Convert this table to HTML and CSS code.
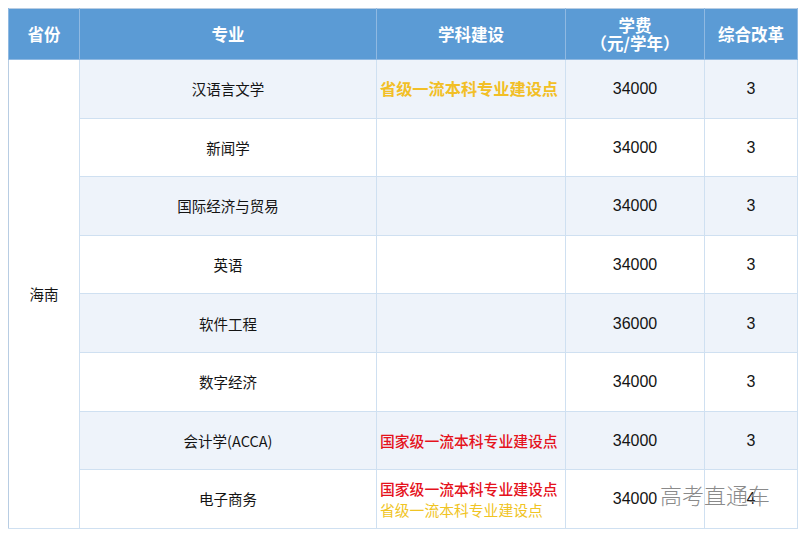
FILE: index.html
```html
<!DOCTYPE html>
<html lang="zh">
<head>
<meta charset="utf-8">
<link rel="stylesheet" href="styles.css">
</head>
<body>
<div class="wrap">
<table class="grid">
  <colgroup>
    <col class="c1"><col class="c2"><col class="c3"><col class="c4"><col class="c5">
  </colgroup>
  <thead>
    <tr>
      <th>省份</th>
      <th>专业</th>
      <th>学科建设</th>
      <th class="fee"><span class="ln">学费</span><span class="ln">（元/学年）</span></th>
      <th>综合改革</th>
    </tr>
  </thead>
  <tbody>
    <tr class="alt">
      <td class="prov" rowspan="8">海南</td>
      <td>汉语言文学</td>
      <td class="build"><span class="gold big">省级一流本科专业建设点</span></td>
      <td class="num">34000</td>
      <td class="num">3</td>
    </tr>
    <tr>
      <td>新闻学</td><td class="build"></td><td class="num">34000</td><td class="num">3</td>
    </tr>
    <tr class="alt">
      <td>国际经济与贸易</td><td class="build"></td><td class="num">34000</td><td class="num">3</td>
    </tr>
    <tr>
      <td>英语</td><td class="build"></td><td class="num">34000</td><td class="num">3</td>
    </tr>
    <tr class="alt">
      <td>软件工程</td><td class="build"></td><td class="num">36000</td><td class="num">3</td>
    </tr>
    <tr>
      <td>数字经济</td><td class="build"></td><td class="num">34000</td><td class="num">3</td>
    </tr>
    <tr class="alt">
      <td>会计学(ACCA)</td>
      <td class="build"><span class="red">国家级一流本科专业建设点</span></td>
      <td class="num">34000</td><td class="num">3</td>
    </tr>
    <tr>
      <td>电子商务</td>
      <td class="build"><span class="red">国家级一流本科专业建设点</span><br><span class="gold">省级一流本科专业建设点</span></td>
      <td class="num">34000</td><td class="num">4</td>
    </tr>
  </tbody>
</table>
<div class="mark">高考直通车</div>
</div>
</body>
</html>
```
FILE: styles.css
```css
html, body {
  margin: 0;
  padding: 0;
  background: #ffffff;
}
body {
  font-family: "Noto Sans CJK SC", "Liberation Sans", sans-serif;
  color: #141414;
}
.wrap {
  position: relative;
  padding: 8px 0 0 8px;
  width: 789px;
}
.grid {
  border-collapse: collapse;
  width: 789px;
  table-layout: fixed;
  border: 1px solid #b8cde3;
}
.c1 { width: 71px; }
.c2 { width: 297px; }
.c3 { width: 189px; }
.c4 { width: 139px; }
.c5 { width: 93px; }
th {
  background: #5b9bd5;
  color: #ffffff;
  font-weight: 700;
  font-size: 16.5px;
  height: 50px;
  padding: 0;
  border: 1px solid #8fb9e2;
  border-top: none;
  text-align: center;
  vertical-align: middle;
  line-height: 22px;
}
th.fee .ln {
  display: block;
  line-height: 18px;
}
td {
  height: 57.6px;
  padding: 0;
  border: 1px solid #cfe0f1;
  text-align: center;
  vertical-align: middle;
  font-size: 14.5px;
  line-height: 21px;
  background: #ffffff;
}
tr.alt td {
  background: #eef3fa;
}
tr.alt td.prov,
td.prov {
  background: #ffffff;
  border-left: 1px solid #b8cde3;
}
td.build {
  text-align: left;
  padding-left: 3px;
}
td.num {
  font-family: "Liberation Sans", "Noto Sans CJK SC", sans-serif;
  font-size: 16px;
}
.gold {
  color: #f0c424;
  font-size: 14.8px;
}
.gold.big {
  font-size: 16.2px;
  font-weight: 700;
  color: #f2bf26;
}
.red {
  color: #e5121c;
  font-size: 14.8px;
  font-weight: 500;
}
.mark {
  position: absolute;
  left: 660px;
  top: 480px;
  font-size: 22px;
  line-height: 28px;
  color: #8a8a8a;
  font-weight: 300;
  text-shadow: 0 0 1px rgba(255,255,255,0.8);
}
```
